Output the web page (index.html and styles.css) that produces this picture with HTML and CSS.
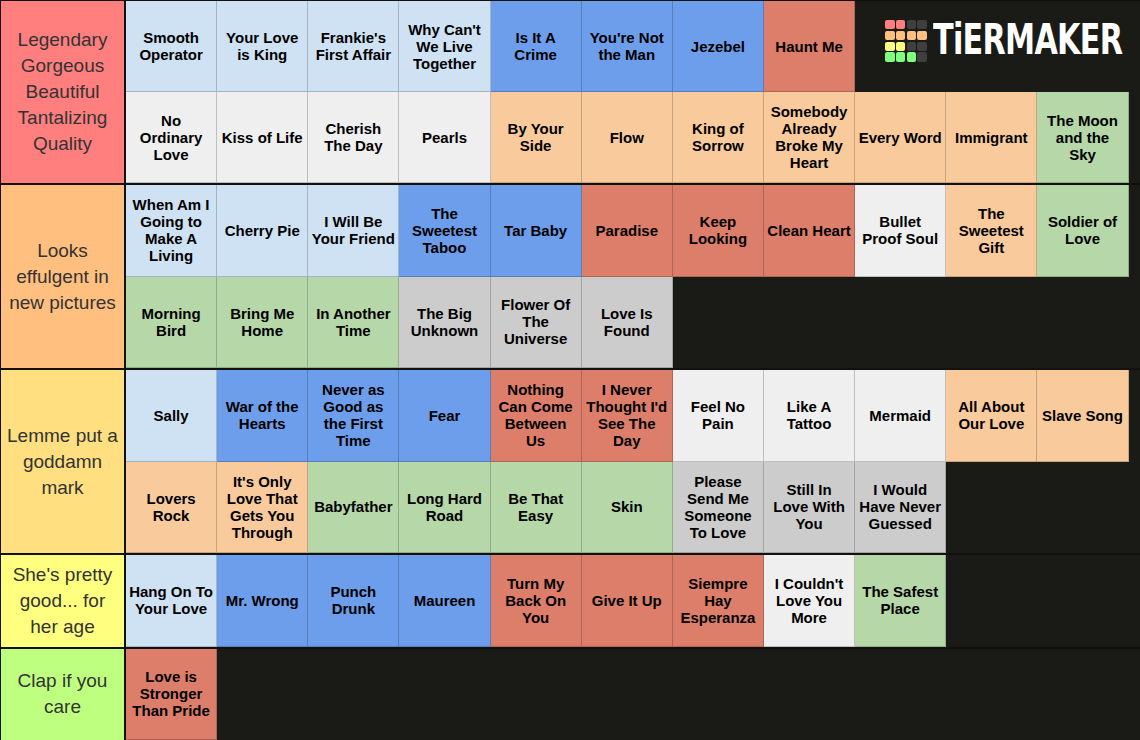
FILE: index.html
```html
<!DOCTYPE html>
<html>
<head>
<meta charset="utf-8">
<link rel="stylesheet" href="styles.css">
</head>
<body>
<div class="board">
  <div class="tier">
    <div class="label t1">Legendary<br>Gorgeous<br>Beautiful<br>Tantalizing<br>Quality</div>
    <div class="items first">
      <div class="item lb">Smooth<br>Operator</div>
      <div class="item lb">Your Love<br>is King</div>
      <div class="item lb">Frankie's<br>First Affair</div>
      <div class="item lb">Why Can't<br>We Live<br>Together</div>
      <div class="item bl">Is It A<br>Crime</div>
      <div class="item bl">You're Not<br>the Man</div>
      <div class="item bl">Jezebel</div>
      <div class="item rd">Haunt Me</div>
      <div class="logo">
        <div class="squares">
          <span class="sq r"></span><span class="sq r"></span><span class="sq d"></span><span class="sq d"></span>
          <span class="sq o"></span><span class="sq o"></span><span class="sq o"></span><span class="sq o"></span>
          <span class="sq y"></span><span class="sq y"></span><span class="sq d"></span><span class="sq d"></span>
          <span class="sq g"></span><span class="sq g"></span><span class="sq g"></span><span class="sq d"></span>
        </div>
        <div class="brand">TiERMAKER</div>
      </div>
      <div class="item wh">No<br>Ordinary<br>Love</div>
      <div class="item wh">Kiss of Life</div>
      <div class="item wh">Cherish<br>The Day</div>
      <div class="item wh">Pearls</div>
      <div class="item or">By Your<br>Side</div>
      <div class="item or">Flow</div>
      <div class="item or">King of<br>Sorrow</div>
      <div class="item or">Somebody<br>Already<br>Broke My<br>Heart</div>
      <div class="item or">Every Word</div>
      <div class="item or">Immigrant</div>
      <div class="item gr">The Moon<br>and the<br>Sky</div>
    </div>
  </div>

  <div class="tier">
    <div class="label t2">Looks<br>effulgent in<br>new pictures</div>
    <div class="items">
      <div class="item lb">When Am I<br>Going to<br>Make A<br>Living</div>
      <div class="item lb">Cherry Pie</div>
      <div class="item lb">I Will Be<br>Your Friend</div>
      <div class="item bl">The<br>Sweetest<br>Taboo</div>
      <div class="item bl">Tar Baby</div>
      <div class="item rd">Paradise</div>
      <div class="item rd">Keep<br>Looking</div>
      <div class="item rd">Clean Heart</div>
      <div class="item wh">Bullet<br>Proof Soul</div>
      <div class="item or">The<br>Sweetest<br>Gift</div>
      <div class="item gr">Soldier of<br>Love</div>
      <div class="item gr">Morning<br>Bird</div>
      <div class="item gr">Bring Me<br>Home</div>
      <div class="item gr">In Another<br>Time</div>
      <div class="item gy">The Big<br>Unknown</div>
      <div class="item gy">Flower Of<br>The<br>Universe</div>
      <div class="item gy">Love Is<br>Found</div>
    </div>
  </div>

  <div class="tier">
    <div class="label t3">Lemme put a<br>goddamn<br>mark</div>
    <div class="items">
      <div class="item lb">Sally</div>
      <div class="item bl">War of the<br>Hearts</div>
      <div class="item bl">Never as<br>Good as<br>the First<br>Time</div>
      <div class="item bl">Fear</div>
      <div class="item rd">Nothing<br>Can Come<br>Between<br>Us</div>
      <div class="item rd">I Never<br>Thought I'd<br>See The<br>Day</div>
      <div class="item wh">Feel No<br>Pain</div>
      <div class="item wh">Like A<br>Tattoo</div>
      <div class="item wh">Mermaid</div>
      <div class="item or">All About<br>Our Love</div>
      <div class="item or">Slave Song</div>
      <div class="item or">Lovers<br>Rock</div>
      <div class="item or">It's Only<br>Love That<br>Gets You<br>Through</div>
      <div class="item gr">Babyfather</div>
      <div class="item gr">Long Hard<br>Road</div>
      <div class="item gr">Be That<br>Easy</div>
      <div class="item gr">Skin</div>
      <div class="item gy">Please<br>Send Me<br>Someone<br>To Love</div>
      <div class="item gy">Still In<br>Love With<br>You</div>
      <div class="item gy">I Would<br>Have Never<br>Guessed</div>
    </div>
  </div>

  <div class="tier">
    <div class="label t4">She's pretty<br>good... for<br>her age</div>
    <div class="items">
      <div class="item lb">Hang On To<br>Your Love</div>
      <div class="item bl">Mr. Wrong</div>
      <div class="item bl">Punch<br>Drunk</div>
      <div class="item bl">Maureen</div>
      <div class="item rd">Turn My<br>Back On<br>You</div>
      <div class="item rd">Give It Up</div>
      <div class="item rd">Siempre<br>Hay<br>Esperanza</div>
      <div class="item wh">I Couldn't<br>Love You<br>More</div>
      <div class="item gr">The Safest<br>Place</div>
    </div>
  </div>

  <div class="tier">
    <div class="label t5">Clap if you<br>care</div>
    <div class="items">
      <div class="item rd">Love is<br>Stronger<br>Than Pride</div>
    </div>
  </div>
</div>
</body>
</html>
```

FILE: styles.css
```css
html, body {
  margin: 0;
  padding: 0;
  background: #1a1a17;
  height: 100%;
  overflow: hidden;
}

.board {
  display: flex;
  flex-direction: column;
  gap: 2px;
  padding: 1px 0 0 1px;
  background: #111110;
  min-height: 100%;
  box-sizing: border-box;
  font-family: "Liberation Sans", Arial, sans-serif;
}

.tier {
  display: flex;
  gap: 2px;
}

.tier:last-child {
  flex: 1;
}

.label {
  width: 123px;
  flex: none;
  display: flex;
  align-items: center;
  justify-content: center;
  text-align: center;
  font-size: 19px;
  line-height: 26px;
  color: #333333;
}

.t1 { background: #ff7f7f; }
.t2 { background: #ffbf7f; }
.t3 { background: #ffdf7f; }
.t4 { background: #ffff7f; }
.t5 { background: #bfff7f; }

.items {
  flex: 1;
  display: grid;
  grid-template-columns: repeat(11, 91.15px);
  grid-auto-rows: 91.5px;
  align-content: start;
  background: #1a1a17;
}

.items.first {
  grid-auto-rows: 91px;
}

.item {
  box-sizing: border-box;
  display: flex;
  align-items: center;
  justify-content: center;
  text-align: center;
  font-size: 15px;
  line-height: 17px;
  font-weight: bold;
  color: #000;
  border-right: 1px solid rgba(0, 0, 0, 0.2);
  border-bottom: 1px solid rgba(0, 0, 0, 0.2);
  padding: 0 1px;
}

.lb { background: #cfe2f3; }
.bl { background: #6d9eeb; }
.rd { background: #dd7e6b; }
.or { background: #f9cb9c; }
.gr { background: #b6d7a8; }
.wh { background: #efefef; }
.gy { background: #cccccc; }

.logo {
  grid-column: span 3;
  display: flex;
  align-items: flex-start;
  padding: 19px 0 0 30px;
  gap: 6px;
}

.squares {
  display: grid;
  grid-template-columns: repeat(4, 9.4px);
  grid-auto-rows: 9.4px;
  gap: 1.4px;
}

.sq {
  display: block;
  border-radius: 2px;
}
.sq.r { background: #ff7f7f; }
.sq.o { background: #ffbf7f; }
.sq.y { background: #ffff7f; }
.sq.g { background: #7fff7f; }
.sq.d { background: #3f3f3f; }

.brand {
  color: #ffffff;
  font-family: "DejaVu Sans", "Liberation Sans", sans-serif;
  font-weight: bold;
  font-size: 42px;
  line-height: 42px;
  margin-top: -1px;
  letter-spacing: -1px;
  transform: scaleX(0.72);
  transform-origin: left center;
  white-space: nowrap;
}
```
